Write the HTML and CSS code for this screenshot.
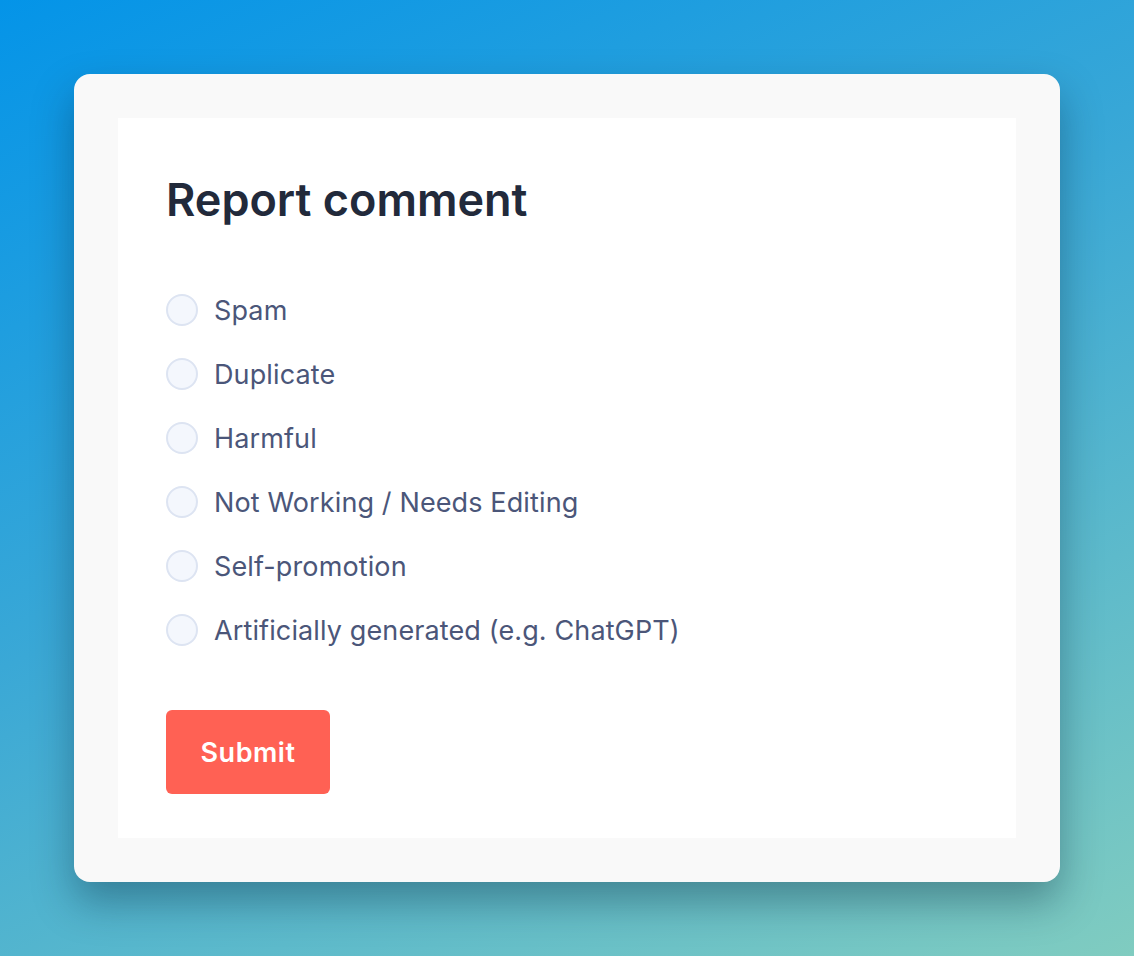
FILE: index.html
```html
<!DOCTYPE html>
<html lang="en">
<head>
<meta charset="utf-8">
<title>Report comment</title>
<link rel="stylesheet" href="styles.css">
</head>
<body>
<div class="stage">
  <div class="card">
    <form class="panel">
      <h1 class="title">Report comment</h1>
      <div class="options">
        <label class="option"><span class="radio"></span><span class="label">Spam</span></label>
        <label class="option"><span class="radio"></span><span class="label">Duplicate</span></label>
        <label class="option"><span class="radio"></span><span class="label">Harmful</span></label>
        <label class="option"><span class="radio"></span><span class="label">Not Working / Needs Editing</span></label>
        <label class="option"><span class="radio"></span><span class="label">Self-promotion</span></label>
        <label class="option"><span class="radio"></span><span class="label">Artificially generated (e.g. ChatGPT)</span></label>
      </div>
      <button type="button" class="submit">Submit</button>
    </form>
  </div>
</div>
</body>
</html>
```
FILE: styles.css
```css
html, body {
  margin: 0;
  padding: 0;
}
body {
  width: 1134px;
  height: 956px;
  overflow: hidden;
  background: linear-gradient(155deg, #0494e8 0%, #3aa8d6 45%, #80ccc0 100%);
  font-family: Inter, "Noto Sans", sans-serif;
}
.stage {
  padding: 74px;
  box-sizing: border-box;
  height: 100%;
}
.card {
  background: #f9f9f9;
  border-radius: 16px;
  padding: 44px;
  box-shadow: 0 20px 40px rgba(0, 30, 50, 0.35);
}
.panel {
  background: #ffffff;
  padding: 52px 48px 44px;
  margin: 0;
}
.title {
  margin: 0;
  font-size: 45px;
  line-height: 60px;
  font-weight: 600;
  color: #222a3b;
  letter-spacing: 0;
}
.options {
  display: flex;
  flex-direction: column;
  gap: 32px;
  margin-top: 64px;
}
.option {
  display: flex;
  align-items: center;
  gap: 16px;
  height: 32px;
}
.radio {
  width: 32px;
  height: 32px;
  box-sizing: border-box;
  border-radius: 50%;
  border: 2px solid #dde4f2;
  background: #f4f7fd;
  flex: none;
}
.label {
  font-size: 27px;
  letter-spacing: 0.12px;
  color: #4b5679;
}
.submit {
  margin-top: 64px;
  display: block;
  width: 164px;
  height: 84px;
  border: none;
  border-radius: 6px;
  background: #ff6154;
  color: #fff;
  font-family: Inter, "Noto Sans", sans-serif;
  font-size: 27px;
  font-weight: 600;
  letter-spacing: 0.5px;
}
```
